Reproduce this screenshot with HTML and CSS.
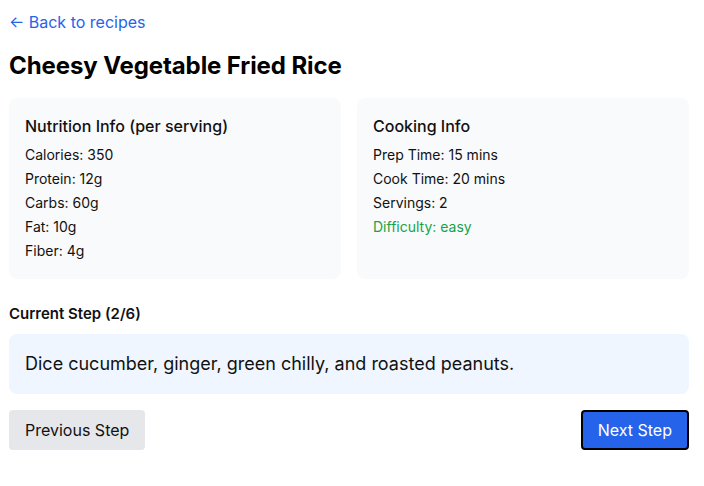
FILE: index.html
```html
<!DOCTYPE html>
<html>
<head>
<meta charset="utf-8">
<link rel="stylesheet" href="styles.css">
</head>
<body>
<main class="page">
  <a class="back" href="#">← Back to recipes</a>
  <h1 class="title">Cheesy Vegetable Fried Rice</h1>
  <section class="cards">
    <div class="card">
      <h2 class="card-title">Nutrition Info (per serving)</h2>
      <p class="item">Calories: 350</p>
      <p class="item">Protein: 12g</p>
      <p class="item">Carbs: 60g</p>
      <p class="item">Fat: 10g</p>
      <p class="item">Fiber: 4g</p>
    </div>
    <div class="card">
      <h2 class="card-title">Cooking Info</h2>
      <p class="item">Prep Time: 15 mins</p>
      <p class="item">Cook Time: 20 mins</p>
      <p class="item">Servings: 2</p>
      <p class="item easy">Difficulty: easy</p>
    </div>
  </section>
  <h3 class="step-label">Current Step (2/6)</h3>
  <div class="step-box">Dice cucumber, ginger, green chilly, and roasted peanuts.</div>
  <div class="actions">
    <button class="btn btn-prev">Previous Step</button>
    <button class="btn btn-next">Next Step</button>
  </div>
</main>
</body>
</html>
```
FILE: styles.css
```css
* { box-sizing: border-box; }
body {
  margin: 0;
  font-family: Inter, "Noto Sans", sans-serif;
  color: #111;
  background: #fff;
}
.page {
  width: 680px;
  margin-left: 9px;
  padding-top: 10px;
}
.back {
  display: block;
  color: #2563eb;
  text-decoration: none;
  font-size: 16px;
  line-height: 24px;
}
.title {
  margin: 16px 0 16px;
  font-size: 24px;
  line-height: 32px;
  font-weight: 700;
  letter-spacing: -0.1px;
  color: #000;
}
.cards {
  display: grid;
  grid-template-columns: 1fr 1fr;
  gap: 16px;
}
.card {
  background: #f9fafb;
  border-radius: 8px;
  padding: 16px;
  min-height: 179px;
}
.card-title {
  margin: 0 0 5px;
  font-size: 16px;
  line-height: 24px;
  font-weight: 500;
}
.item {
  margin: 0;
  font-size: 14px;
  line-height: 24px;
}
.easy { color: #16a34a; }
.step-label {
  margin: 25px 0 10px;
  font-size: 15px;
  line-height: 20px;
  font-weight: 600;
}
.step-box {
  background: #eff6ff;
  border-radius: 8px;
  padding: 16px;
  font-size: 18px;
  line-height: 28px;
}
.actions {
  display: flex;
  justify-content: space-between;
  margin-top: 16px;
}
.btn {
  font-family: inherit;
  font-size: 16px;
  line-height: 24px;
  padding: 8px 16px;
  border-radius: 4px;
  border: none;
  cursor: pointer;
}
.btn-prev {
  background: #e5e7eb;
  color: #111;
}
.btn-next {
  background: #2563eb;
  color: #fff;
  border: 2px solid #000;
  padding: 6px 15px;
}
```
